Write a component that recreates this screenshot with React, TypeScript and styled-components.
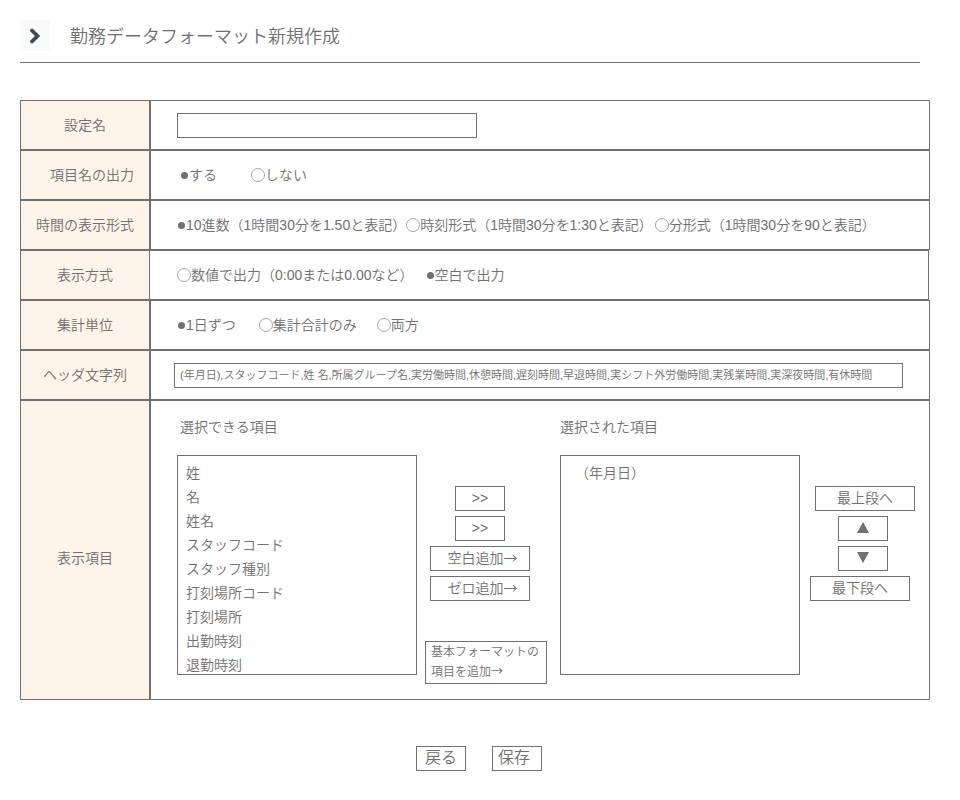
import React from "react";
import styled, { createGlobalStyle } from "styled-components";

const ink = "#707070";

const GlobalStyle = createGlobalStyle`
  *, *::before, *::after { box-sizing: border-box; }
  body {
    margin: 0;
    background: #ffffff;
    color: ${ink};
    font: 350 14px/20px "Liberation Sans", "Noto Sans CJK JP", sans-serif;
  }
  button, input, select, option { font: inherit; color: inherit; }
`;

const Page = styled.main`
  min-width: 920px;
  padding: 20px 30px 24px 20px;
`;

const Header = styled.header`
  display: flex;
  align-items: center;
  gap: 20px;
  margin-right: 10px;
  padding-bottom: 11px;
  border-bottom: 1px solid ${ink};
`;

const IconButton = styled.button`
  display: flex;
  align-items: center;
  justify-content: center;
  width: 30px;
  height: 31px;
  padding: 0;
  border: 0;
  background: #f8fafc;
`;

const Title = styled.h1`
  margin: 0;
  padding-top: 2px;
  font-size: 18px;
  line-height: 24px;
  font-weight: inherit;
`;

const FormTable = styled.div`
  margin-top: 37px;
`;

const Row = styled.div`
  display: flex;
  min-height: 50px;
`;

const LabelCell = styled.div<{ $top?: number }>`
  display: flex;
  align-items: center;
  justify-content: center;
  flex: 0 0 130px;
  padding-top: ${(p) => p.$top ?? 0}px;
  border: 1px solid ${ink};
  background: #fff4e9;
  white-space: pre;
`;

const ValueCell = styled.div<{ $left?: number; $right?: number; $joined?: boolean }>`
  display: flex;
  align-items: center;
  flex: 1;
  min-width: 0;
  margin-right: ${(p) => (p.$joined ? 1 : 0)}px;
  padding: 0 ${(p) => p.$right ?? 26}px 0 ${(p) => p.$left ?? 26}px;
  border: 1px solid ${ink};
  border-left-width: ${(p) => (p.$joined ? 0 : 1)}px;
`;

const TextInput = styled.input<{ $fill?: boolean }>`
  width: ${(p) => (p.$fill ? "100%" : "300px")};
  height: 25px;
  padding: 0 5px 2px;
  border: 1px solid ${ink};
  border-radius: 0;
  background: #ffffff;
  font-size: ${(p) => (p.$fill ? 11 : 14)}px;
`;

const Option = styled.label<{ $gap: number }>`
  display: flex;
  align-items: center;
  margin-right: ${(p) => p.$gap}px;
  white-space: nowrap;
`;

const Radio = styled.input`
  appearance: none;
  flex: none;
  width: 14px;
  height: 14px;
  margin: 0;
  border: 1px solid #a8a8a8;
  border-radius: 50%;

  &:checked {
    width: 7px;
    height: 7px;
    margin: 0 1px;
    border: 0;
    background: ${ink};
  }
`;

const Picker = styled.div`
  display: grid;
  flex: 1;
  grid-template-columns: minmax(0, 1fr) 143px minmax(0, 1fr) 129px;
  row-gap: 16px;
  padding: 14px 0 15px;
`;

const ListTitle = styled.label<{ $column: number; $left?: number }>`
  grid-column: ${(p) => p.$column};
  grid-row: 1;
  padding-left: ${(p) => p.$left ?? 0}px;
  line-height: 24px;
`;

const ListBox = styled.select<{ $column: number; $indent: number }>`
  grid-column: ${(p) => p.$column};
  grid-row: 2;
  width: 100%;
  height: 220px;
  padding: 4px 0 0;
  border: 1px solid ${ink};
  border-radius: 0;
  background: #ffffff;
  overflow: hidden;

  option {
    height: 24px;
    min-height: 24px;
    padding: 2px ${(p) => p.$indent}px;
    line-height: 20px;
  }
`;

const AddColumn = styled.div`
  grid-column: 2;
  grid-row: 2;
  display: flex;
  flex-direction: column;
  align-items: flex-start;
  gap: 40px;
  padding: 31px 0 0 8px;
`;

const MoveColumn = styled.div`
  grid-column: 4;
  grid-row: 2;
  padding: 31px 0 0 10px;
`;

const ButtonStack = styled.div<{ $width: number }>`
  display: flex;
  flex-direction: column;
  align-items: center;
  gap: 5px;
  width: ${(p) => p.$width}px;
`;

const Button = styled.button<{
  $width?: number;
  $self?: string;
  $align?: string;
  $large?: boolean;
  $left?: number;
}>`
  align-self: ${(p) => p.$self ?? "auto"};
  width: ${(p) => p.$width ?? 50}px;
  height: 25px;
  padding: 0 5px 2px ${(p) => p.$left ?? 5}px;
  border: 1px solid ${ink};
  border-radius: 0;
  background: #ffffff;
  font-size: ${(p) => (p.$large ? 16 : 14)}px;
  line-height: 20px;
  text-align: ${(p) => p.$align ?? "center"};
  white-space: nowrap;
`;

const BlockButton = styled(Button)`
  height: 43px;
  font-size: 12px;
  text-align: left;
`;

const Arrow = styled.span`
  font-family: "Noto Sans CJK JP", sans-serif;
  line-height: 1;
`;

const Triangle = styled.svg`
  display: block;
  margin: 0 auto;
`;

const Footer = styled.footer`
  display: flex;
  justify-content: center;
  gap: 26px;
  margin-top: 46px;
  padding-left: 8px;
`;

type Choice = { text: string; gap: number };

const RadioRow = ({ name, choices, selected }: { name: string; choices: Choice[]; selected: number }) => (
  <>
    {choices.map((c, i) => (
      <Option key={c.text} $gap={c.gap}>
        <Radio type="radio" name={name} defaultChecked={i === selected} />
        {c.text}
      </Option>
    ))}
  </>
);

const available = [
  "姓",
  "名",
  "姓名",
  "スタッフコード",
  "スタッフ種別",
  "打刻場所コード",
  "打刻場所",
  "出勤時刻",
  "退勤時刻",
];

const headerText =
  "(年月日),スタッフコード,姓 名,所属グループ名,実労働時間,休憩時間,遅刻時間,早退時間,実シフト外労働時間,実残業時間,実深夜時間,有休時間";

export default function App() {
  return (
    <>
      <GlobalStyle />
      <Page lang="ja">
        <Header>
          <IconButton type="button" aria-label="開く">
            <svg width="12" height="16" viewBox="0 0 12 16" fill="none" aria-hidden="true">
              <path d="M3 2.5 8.5 8 3 13.5" stroke="#414b55" strokeWidth="3.8" strokeLinecap="round" strokeLinejoin="miter" />
            </svg>
          </IconButton>
          <Title>勤務データフォーマット新規作成</Title>
        </Header>

        <FormTable>
          <Row>
            <LabelCell as="label" htmlFor="setting-name">設定名</LabelCell>
            <ValueCell>
              <TextInput id="setting-name" type="text" />
            </ValueCell>
          </Row>
          <Row role="radiogroup" aria-label="項目名の出力">
            <LabelCell>{"　項目名の出力"}</LabelCell>
            <ValueCell $left={29}>
              <RadioRow
                name="output"
                selected={0}
                choices={[{ text: "する", gap: 34 }, { text: "しない", gap: 0 }]}
              />
            </ValueCell>
          </Row>
          <Row role="radiogroup" aria-label="時間の表示形式">
            <LabelCell>時間の表示形式</LabelCell>
            <ValueCell>
              <RadioRow
                name="time-format"
                selected={0}
                choices={[
                  { text: "10進数（1時間30分を1.50と表記）", gap: 0 },
                  { text: "時刻形式（1時間30分を1:30と表記）", gap: 2 },
                  { text: "分形式（1時間30分を90と表記）", gap: 0 },
                ]}
              />
            </ValueCell>
          </Row>
          <Row role="radiogroup" aria-label="表示方式">
            <LabelCell>表示方式</LabelCell>
            <ValueCell $joined $left={27}>
              <RadioRow
                name="display"
                selected={1}
                choices={[
                  { text: "数値で出力（0:00または0.00など）", gap: 12 },
                  { text: "空白で出力", gap: 0 },
                ]}
              />
            </ValueCell>
          </Row>
          <Row role="radiogroup" aria-label="集計単位">
            <LabelCell>集計単位</LabelCell>
            <ValueCell>
              <RadioRow
                name="unit"
                selected={0}
                choices={[
                  { text: "1日ずつ", gap: 23 },
                  { text: "集計合計のみ", gap: 20 },
                  { text: "両方", gap: 0 },
                ]}
              />
            </ValueCell>
          </Row>
          <Row>
            <LabelCell as="label" htmlFor="header-text">ヘッダ文字列</LabelCell>
            <ValueCell $left={23}>
              <TextInput $fill id="header-text" type="text" defaultValue={headerText} />
            </ValueCell>
          </Row>
          <Row>
            <LabelCell $top={16}>表示項目</LabelCell>
            <ValueCell $right={0}>
              <Picker>
                <ListTitle htmlFor="available" $column={1} $left={3}>選択できる項目</ListTitle>
                <ListTitle htmlFor="chosen" $column={3}>選択された項目</ListTitle>
                <ListBox id="available" multiple $column={1} $indent={8}>
                  {available.map((item) => (
                    <option key={item}>{item}</option>
                  ))}
                </ListBox>
                <AddColumn>
                  <ButtonStack $width={110}>
                    <Button type="button">&gt;&gt;</Button>
                    <Button type="button">&gt;&gt;</Button>
                    <Button type="button" $width={100} $left={10}>空白追加<Arrow>→</Arrow></Button>
                    <Button type="button" $width={100} $left={10}>ゼロ追加<Arrow>→</Arrow></Button>
                  </ButtonStack>
                  <BlockButton type="button" $width={122}>
                    基本フォーマットの
                    <br />
                    項目を追加<Arrow>→</Arrow>
                  </BlockButton>
                </AddColumn>
                <ListBox id="chosen" multiple $column={3} $indent={14}>
                  <option>（年月日）</option>
                </ListBox>
                <MoveColumn>
                  <ButtonStack $width={105}>
                    <Button type="button" $width={100} $self="flex-end">最上段へ</Button>
                    <Button type="button" aria-label="上へ">
                      <Triangle width="12" height="11" viewBox="0 0 12 11" aria-hidden="true">
                        <path d="M6 0 12 11H0Z" fill={ink} />
                      </Triangle>
                    </Button>
                    <Button type="button" aria-label="下へ">
                      <Triangle width="12" height="11" viewBox="0 0 12 11" aria-hidden="true">
                        <path d="M0 0H12L6 11Z" fill={ink} />
                      </Triangle>
                    </Button>
                    <Button type="button" $width={100} $self="flex-start">最下段へ</Button>
                  </ButtonStack>
                </MoveColumn>
              </Picker>
            </ValueCell>
          </Row>
        </FormTable>

        <Footer>
          <Button type="button" $large>戻る</Button>
          <Button type="button" $large $align="left">保存</Button>
        </Footer>
      </Page>
    </>
  );
}
